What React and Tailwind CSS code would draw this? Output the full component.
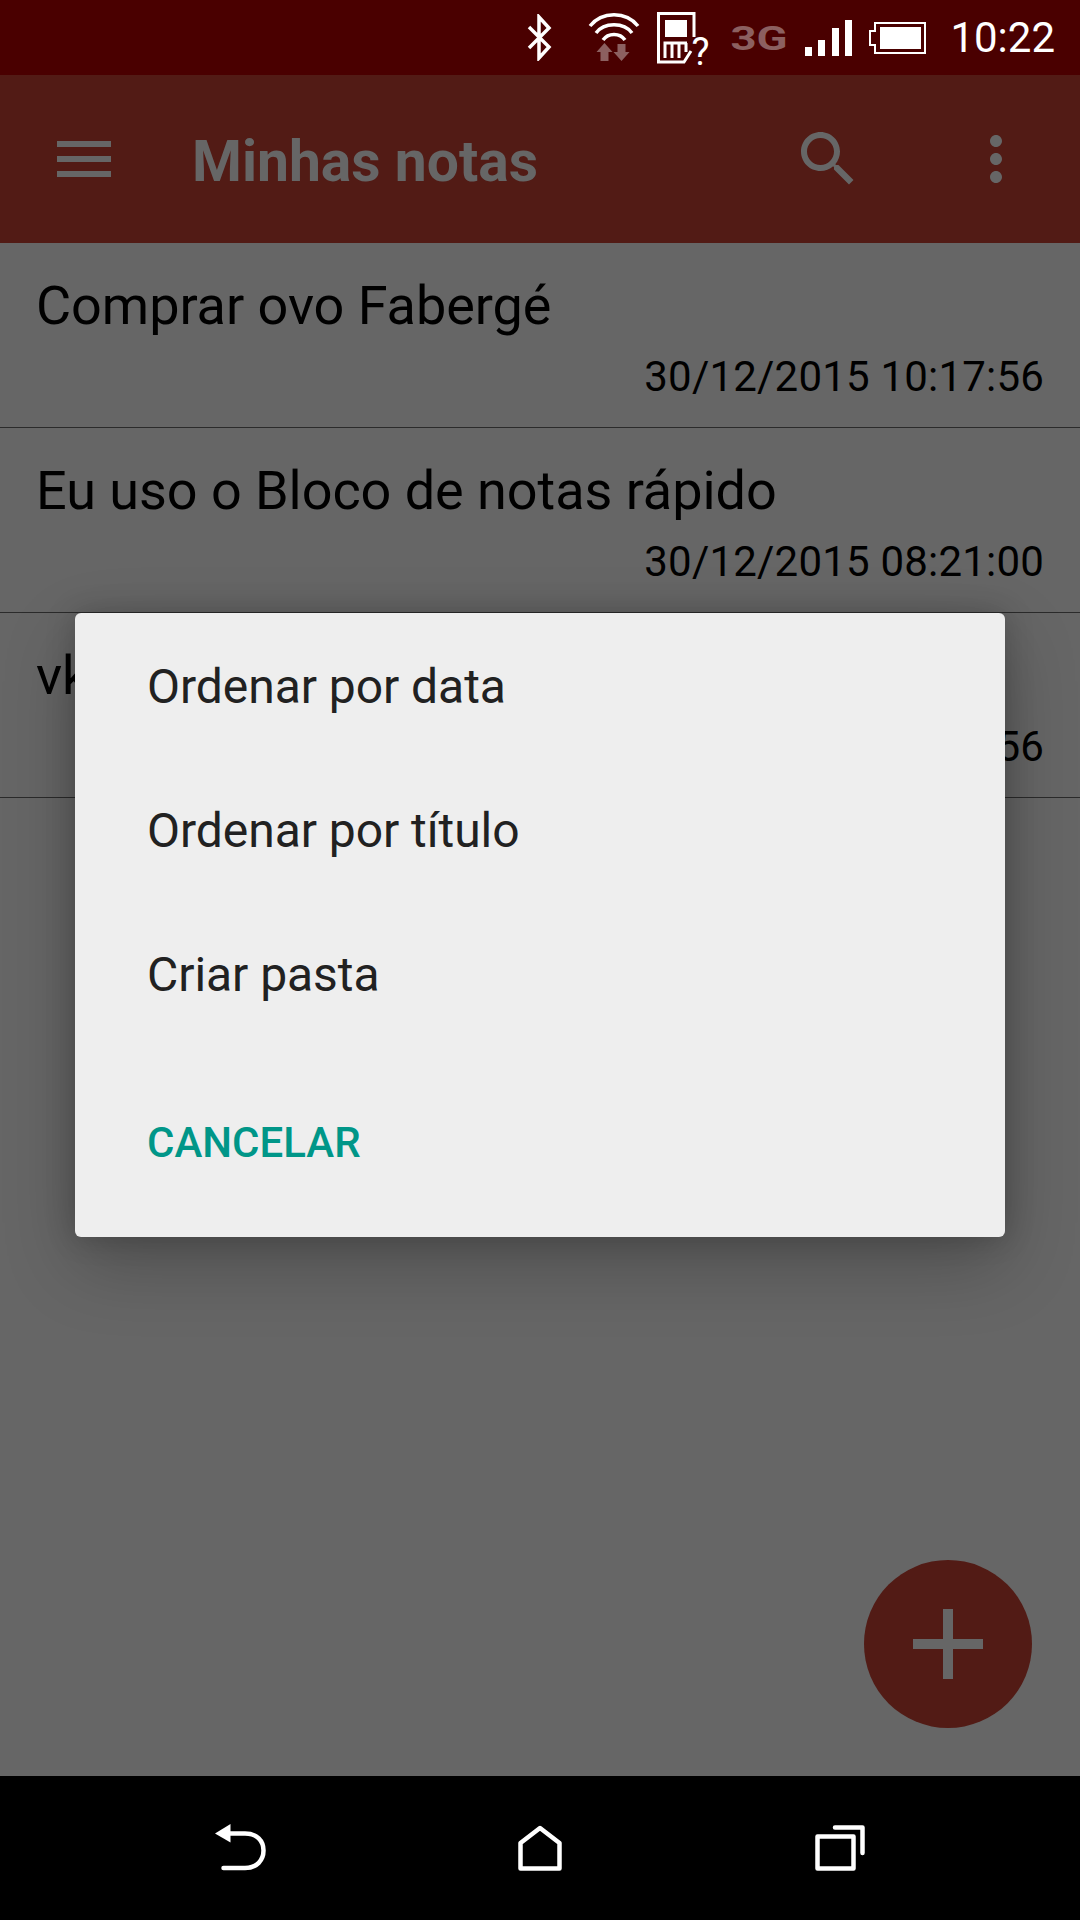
const notes = [
  { title: "Comprar ovo Fabergé", date: "30/12/2015 10:17:56" },
  { title: "Eu uso o Bloco de notas rápido", date: "30/12/2015 08:21:00" },
  { title: "vk", date: "30/12/2015 08:20:56" },
];

const options = ["Ordenar por data", "Ordenar por título", "Criar pasta"];

function StatusBar() {
  return (
    <div className="h-[75px] shrink-0 bg-[#4a0000] flex items-center justify-end pr-[25px] text-white">
      {/* bluetooth */}
      <svg width="25" height="47" viewBox="0 0 25 47" fill="none" stroke="#fff" strokeWidth="3.5" className="mr-[36px]">
        <path d="M2 13 L22 33 L12 44 V3 L22 14 L2 34" />
      </svg>
      {/* wifi with data arrows */}
      <svg width="52" height="50" viewBox="0 0 52 50" fill="none" className="mr-[17px]">
        <path d="M2 13 C14 -2 38 -2 50 13" stroke="#fff" strokeWidth="3.5" />
        <path d="M8 20 C16 9 36 9 44 20" stroke="#fff" strokeWidth="3.5" />
        <path d="M15 27 C20 19.5 32 19.5 37 27" stroke="#fff" strokeWidth="3.5" />
        <path d="M16.5 30 L24.5 39 H20.5 V48 H12.5 V39 H8.5 Z" fill="#8c6060" />
        <path d="M33.5 48 L41.5 39 H37.5 V31 H29.5 V39 H25.5 Z" fill="#8c6060" />
      </svg>
      {/* sim with question mark */}
      <div className="relative w-[52px] h-[52px] mr-[22px]">
        <svg width="52" height="52" viewBox="0 0 52 52" fill="none" stroke="#fff" strokeWidth="3" className="block">
          <path d="M37 25 V1.5 H1.5 V50 H27 L34 39" />
          <rect x="8" y="8" width="22" height="17" fill="#fff" stroke="none" />
          <path d="M8 46 V31 H30 M15 31 V46 M22 31 V46 M29 31 V40" />
        </svg>
        <span className="absolute right-0 top-[21px] font-['Roboto'] text-[38px] leading-[38px]">?</span>
      </div>
      <div className="w-[56px] mr-[18px] flex justify-center font-['Roboto'] font-bold text-[34px] leading-none text-[#8c6060] scale-x-[1.34]">
        3G
      </div>
      {/* signal */}
      <svg width="47" height="36" viewBox="0 0 47 36" fill="#fff" className="mr-[17px]">
        <rect x="0" y="27" width="7" height="9" />
        <rect x="13" y="20" width="7" height="16" />
        <rect x="27" y="8" width="7" height="28" />
        <rect x="40" y="0" width="7" height="36" />
      </svg>
      {/* battery */}
      <svg width="57" height="32" viewBox="0 0 57 32" className="mr-[24px]">
        <path d="M6 1 H56 V31 H6 V23 H1 V9 H6 Z" fill="none" stroke="#fff" strokeWidth="2" />
        <rect x="11" y="5" width="41" height="22" fill="#fff" />
      </svg>
      <span className="font-['Roboto'] text-[42px] leading-none">10:22</span>
    </div>
  );
}

function Toolbar() {
  return (
    <div className="h-[168px] shrink-0 bg-[#521b15] flex items-center pl-[48px] pr-[48px] text-[#666666]">
      <svg width="72" height="72" viewBox="0 0 24 24" fill="currentColor">
        <path d="M3 18h18v-2H3v2zm0-5h18v-2H3v2zm0-5h18V6H3v2z" />
      </svg>
      <h1 className="ml-[72px] mt-[4px] flex-1 font-['Roboto'] font-bold text-[57px] leading-none">Minhas notas</h1>
      <svg width="72" height="72" viewBox="0 0 24 24" fill="currentColor" className="mr-[96px]">
        <path d="M15.5 14h-.79l-.28-.27C15.41 12.59 16 11.11 16 9.5 16 5.91 13.09 3 9.5 3S3 5.91 3 9.5 5.91 16 9.5 16c1.61 0 3.09-.59 4.23-1.57l.27.28v.79l5 4.99L20.49 19l-4.99-5zm-6 0C7.01 14 5 11.99 5 9.5S7.01 5 9.5 5 14 7.01 14 9.5 11.99 14 9.5 14z" />
      </svg>
      <svg width="72" height="72" viewBox="0 0 24 24" fill="currentColor">
        <path d="M12 8c1.1 0 2-.9 2-2s-.9-2-2-2-2 .9-2 2 .9 2 2 2zm0 2c-1.1 0-2 .9-2 2s.9 2 2 2 2-.9 2-2-.9-2-2-2zm0 6c-1.1 0-2 .9-2 2s.9 2 2 2 2-.9 2-2-.9-2-2-2z" />
      </svg>
    </div>
  );
}

function NavBar() {
  return (
    <div className="h-[144px] shrink-0 bg-black flex items-center pb-[1px]">
      <div className="ml-[215px]">
        <svg width="51" height="47" viewBox="0 0 51 47" fill="none" stroke="#fff" strokeWidth="4.5" strokeLinecap="round" className="block">
          <path d="M0 9.5 L15.5 0 V18.5 Z" fill="#fff" stroke="none" />
          <path d="M15 9.5 H30 C42 9.5 48.5 17 48.5 26.5 C48.5 36 42 44 30 44 H8.5" />
        </svg>
      </div>
      <div className="ml-[252px]">
        <svg width="44" height="46" viewBox="0 0 44 46" fill="none" stroke="#fff" strokeWidth="4.5" strokeLinejoin="round" className="block">
          <path d="M22 3 L2.5 18 V43.5 H41.5 V18 Z" />
        </svg>
      </div>
      <div className="ml-[253px]">
        <svg width="50" height="46" viewBox="0 0 50 46" fill="none" stroke="#fff" strokeWidth="4.5" strokeLinecap="round" strokeLinejoin="round" className="block">
          <rect x="2.5" y="11.5" width="36" height="32" />
          <path d="M20 2.5 H47.5 V28" />
        </svg>
      </div>
    </div>
  );
}

export default function App() {
  return (
    <div className="relative w-[1080px] h-[1920px] overflow-hidden flex flex-col bg-[#666666] font-['Roboto',sans-serif]">
      <StatusBar />
      <Toolbar />

      <div className="flex-1 relative">
        {notes.map((note) => (
          <div key={note.date} className="h-[185px] border-b border-[#2b2b2b] px-[36px] flex flex-col text-black">
            <div className="mt-[31px] text-[54px] leading-[64px] tracking-[-0.05px] whitespace-nowrap">{note.title}</div>
            <div className="mt-[13px] text-right text-[42px] leading-[52px] tracking-[0.2px]">{note.date}</div>
          </div>
        ))}

        {/* add button */}
        <div className="absolute right-[48px] bottom-[48px] w-[168px] h-[168px] rounded-full bg-[#521b15] flex items-center justify-center">
          <svg width="70" height="70" viewBox="0 0 70 70" fill="#666666">
            <rect x="30" y="0" width="10" height="70" />
            <rect x="0" y="30" width="70" height="10" />
          </svg>
        </div>
      </div>

      <NavBar />

      {/* dialog */}
      <div className="absolute left-[75px] top-[613px] w-[930px] h-[624px] rounded-[6px] bg-[#eeeeee] shadow-[0_27px_72px_rgba(0,0,0,0.24),0_0_30px_rgba(0,0,0,0.2)] flex flex-col pl-[72px]">
        {options.map((opt) => (
          <div key={opt} className="h-[144px] pt-[4px] flex items-center text-[48px] tracking-[-0.05px] text-[#212121]">
            {opt}
          </div>
        ))}
        <div className="h-[192px] pt-[2px] flex items-center font-medium text-[42px] text-[#009688]">CANCELAR</div>
      </div>
    </div>
  );
}
